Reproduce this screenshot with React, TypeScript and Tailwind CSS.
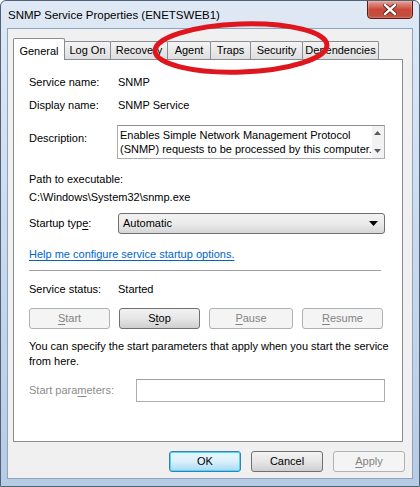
import React from "react";

const font = { fontFamily: '"Liberation Sans", Arial, sans-serif' };

function U({ children }: { children: React.ReactNode }) {
  return <span className="underline underline-offset-2">{children}</span>;
}

function Tab({ label, selected, w }: { label: string; selected?: boolean; w: string }) {
  if (selected) {
    return (
      <div
        className={`${w} h-[22px] -mb-px relative z-10 bg-white border border-[#898c95] border-b-0 rounded-t-[2px] flex items-start justify-center pt-[4px] text-[11px] text-black`}
      >
        {label}
      </div>
    );
  }
  return (
    <div
      className={`${w} h-[18px] bg-gradient-to-b from-[#f4f4f4] to-[#dedede] border border-[#898c95] border-b-0 -ml-px rounded-t-[2px] flex items-center justify-center text-[11px] text-black`}
    >
      {label}
    </div>
  );
}

function Btn({
  children,
  disabled,
  w = "w-[81px]",
}: {
  children: React.ReactNode;
  disabled?: boolean;
  w?: string;
}) {
  return (
    <div
      className={`${w} h-[21px] rounded-[3px] border flex items-center justify-center text-[11px] ${
        disabled
          ? "border-[#adb2b5] bg-[#f4f4f4] text-[#838383]"
          : "border-[#707070] bg-gradient-to-b from-[#f2f2f2] via-[#e6e6e6] to-[#cfcfcf] text-black"
      }`}
    >
      {children}
    </div>
  );
}

export default function App() {
  return (
    <div
      className="w-[420px] h-[487px] relative overflow-hidden bg-gradient-to-b from-[#dfe9f5] via-[#c9daee] to-[#b6cbe4] border border-[#4f6278] rounded-t-[6px] flex flex-col"
      style={font}
    >
      {/* title bar */}
      <div className="h-[27px] flex items-start shrink-0">
        <div className="pl-[7px] pt-[7px] text-[11.5px] text-black leading-[15px]">
          SNMP Service Properties (ENETSWEB1)
        </div>
        <div className="ml-auto mr-[6px] w-[46px] h-[19px] -mt-px rounded-b-[4px] border border-[#5a1a14] bg-gradient-to-b from-[#e6a197] via-[#c8493c] to-[#c2503f] flex items-center justify-center shadow-[inset_0_0_2px_rgba(255,255,255,0.7)]">
          <svg width="14" height="11" viewBox="0 0 14 11">
            <path
              d="M2 1 L12 10 M12 1 L2 10"
              stroke="#4a1a14"
              strokeWidth="4"
              strokeLinecap="square"
            />
            <path
              d="M2 1 L12 10 M12 1 L2 10"
              stroke="#ffffff"
              strokeWidth="2.4"
              strokeLinecap="square"
            />
          </svg>
        </div>
      </div>

      {/* client area */}
      <div className="mx-[6px] mb-[7px] flex-1 bg-[#f0f0f0] border border-[#8ea3bd] flex flex-col">
        {/* tabs */}
        <div className="mt-[8px] ml-[5px] flex items-end h-[22px]">
          <Tab label="General" selected w="w-[52px]" />
          <Tab label="Log On" w="w-[47px]" />
          <Tab label="Recovery" w="w-[58px]" />
          <Tab label="Agent" w="w-[44px]" />
          <Tab label="Traps" w="w-[41px]" />
          <Tab label="Security" w="w-[53px]" />
          <Tab label="Dependencies" w="w-[77px]" />
        </div>

        {/* panel */}
        <div className="ml-[5px] w-[390px] h-[383px] bg-white border border-[#898c95] text-[11px] text-black pl-[15px] leading-[15px]">
          <div className="mt-[15px] flex">
            <div className="w-[89px]">Service name:</div>
            <div>SNMP</div>
          </div>
          <div className="mt-[8px] flex">
            <div className="w-[89px]">Display name:</div>
            <div>SNMP Service</div>
          </div>
          <div className="mt-[12px] flex items-start">
            <div className="w-[88px] pt-[6px]">Description:</div>
            <div className="w-[268px] h-[34px] border border-[#abadb3] border-t-[#8e8f8f] flex">
              <div className="flex-1 pl-[2px] pt-[2px] leading-[14px] whitespace-nowrap">
                Enables Simple Network Management Protocol
                <br />
                (SNMP) requests to be processed by this computer.
              </div>
              <div className="w-[16px] bg-[#f2f2f2] flex flex-col justify-between items-center py-[5px]">
                <svg width="7" height="4" viewBox="0 0 7 4">
                  <path d="M0 4 L3.5 0 L7 4 Z" fill="#5a5a5a" />
                </svg>
                <svg width="7" height="4" viewBox="0 0 7 4">
                  <path d="M0 0 L3.5 4 L7 0 Z" fill="#5a5a5a" />
                </svg>
              </div>
            </div>
          </div>
          <div className="mt-[13px]">Path to executable:</div>
          <div className="mt-[3px]">C:\Windows\System32\snmp.exe</div>
          <div className="mt-[8px] flex items-center">
            <div className="w-[89px]">
              Startup typ<U>e</U>:
            </div>
            <div className="w-[267px] h-[21px] rounded-[3px] border border-[#707070] bg-gradient-to-b from-[#f2f2f2] via-[#ebebeb] to-[#d6d6d6] flex items-center pl-[4px] pr-[6px]">
              <span className="flex-1">Automatic</span>
              <svg width="9" height="5" viewBox="0 0 9 5">
                <path d="M0 0 L4.5 5 L9 0 Z" fill="#000" />
              </svg>
            </div>
          </div>
          <div className="mt-[13px] text-[#0066cc] underline underline-offset-2">
            Help me configure service startup options.
          </div>
          <div className="mt-[8px] w-[352px] h-px bg-[#a0a0a0]" />
          <div className="mt-[11px] flex">
            <div className="w-[89px]">Service status:</div>
            <div>Started</div>
          </div>
          <div className="mt-[11px] flex gap-[9px]">
            <Btn disabled>
              <U>S</U>tart
            </Btn>
            <Btn>
              S<U>t</U>op
            </Btn>
            <Btn disabled w="w-[84px]">
              <U>P</U>ause
            </Btn>
            <Btn disabled>
              <U>R</U>esume
            </Btn>
          </div>
          <div className="mt-[10px] whitespace-nowrap">
            You can specify the start parameters that apply when you start the service
            <br />
            from here.
          </div>
          <div className="mt-[10px] flex items-center">
            <div className="w-[107px] text-[#8d8d8d]">
              Start para<U>m</U>eters:
            </div>
            <div className="w-[249px] h-[23px] border border-[#abadb3] border-t-[#a0a0a0] bg-white" />
          </div>
        </div>

        {/* bottom buttons */}
        <div className="mt-[9px] flex justify-end gap-[10px] pr-[7px]">
          <div className="w-[72px] h-[21px] rounded-[3px] border border-[#3c7fb1] bg-gradient-to-b from-[#eaf6fd] via-[#d9f0fc] to-[#a7d9f5] shadow-[inset_0_0_0_1px_#48d8fb] flex items-center justify-center text-[11px] text-black">
            OK
          </div>
          <div className="w-[72px] h-[21px] rounded-[3px] border border-[#707070] bg-gradient-to-b from-[#f2f2f2] via-[#e6e6e6] to-[#cfcfcf] flex items-center justify-center text-[11px] text-black">
            Cancel
          </div>
          <div className="w-[72px] h-[21px] rounded-[3px] border border-[#adb2b5] bg-[#f4f4f4] flex items-center justify-center text-[11px] text-[#838383]">
            <U>A</U>pply
          </div>
        </div>
      </div>

      {/* red annotation ellipse */}
      <svg
        className="absolute left-0 top-0 pointer-events-none"
        width="420"
        height="90"
        viewBox="0 0 420 90"
      >
        <ellipse
          cx="240"
          cy="47"
          rx="86"
          ry="24"
          fill="none"
          stroke="#e0161f"
          strokeWidth="5"
          transform="rotate(-2 240 47)"
        />
      </svg>
    </div>
  );
}
